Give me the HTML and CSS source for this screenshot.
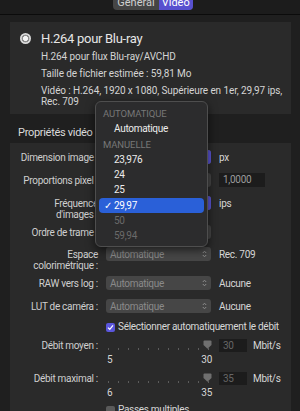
FILE: index.html
```html
<!DOCTYPE html>
<html>
<head>
    <meta charset="utf-8">
    <title>Vidéo</title>
    <link rel="stylesheet" href="styles.css">
</head>
<body>
    <div class="topbar">
        <div class="seg">
            <span class="seg-item">Général</span>
            <span class="seg-item on">Vidéo</span>
        </div>
    </div>

    <div class="panel preset">
        <span class="radio"></span>
        <div class="info">
            <div class="title">H.264 pour Blu-ray</div>
            <p>H.264 pour flux Blu-ray/AVCHD</p>
            <p>Taille de fichier estimée : 59,81 Mo</p>
            <p>Vidéo : H.264, 1920 x 1080, Supérieure en 1er, 29,97 ips,<br>Rec. 709</p>
        </div>
    </div>

    <h2 class="section">Propriétés vidéo</h2>

    <div class="panel props">
        <div class="row">
            <label>Dimension image :</label>
            <div class="popup on"><span>1920 x 1080</span><span class="arrows"><svg width="5" height="8" viewBox="0 0 5 8"><path d="M0.8 3 L2.5 1.2 L4.2 3 M0.8 5 L2.5 6.8 L4.2 5" fill="none" stroke="#fff" stroke-width="1"/></svg></span></div>
            <span class="unit">px</span>
        </div>
        <div class="row">
            <label>Proportions pixel :</label>
            <div class="popup"><span>Carré</span><span class="arrows"></span></div>
            <span class="field">1,0000</span>
        </div>
        <div class="row tall">
            <label>Fréquence<br>d'images :</label>
            <div class="popup on"><span>29,97</span><span class="arrows"></span></div>
            <span class="unit">ips</span>
        </div>
        <div class="row short">
            <label>Ordre de trame :</label>
            <div class="popup"><span>Supérieure en 1er</span><span class="arrows"></span></div>
            <span></span>
        </div>
        <div class="row tall">
            <label>Espace<br>colorimétrique :</label>
            <div class="popup"><span>Automatique</span><span class="arrows"><svg width="5" height="8" viewBox="0 0 5 8"><path d="M0.8 3 L2.5 1.2 L4.2 3 M0.8 5 L2.5 6.8 L4.2 5" fill="none" stroke="#8c8c8c" stroke-width="1"/></svg></span></div>
            <span class="unit">Rec. 709</span>
        </div>
        <div class="row">
            <label>RAW vers log :</label>
            <div class="popup"><span>Automatique</span><span class="arrows"><svg width="5" height="8" viewBox="0 0 5 8"><path d="M0.8 3 L2.5 1.2 L4.2 3 M0.8 5 L2.5 6.8 L4.2 5" fill="none" stroke="#8c8c8c" stroke-width="1"/></svg></span></div>
            <span class="unit">Aucune</span>
        </div>
        <div class="row">
            <label>LUT de caméra :</label>
            <div class="popup"><span>Automatique</span><span class="arrows"><svg width="5" height="8" viewBox="0 0 5 8"><path d="M0.8 3 L2.5 1.2 L4.2 3 M0.8 5 L2.5 6.8 L4.2 5" fill="none" stroke="#8c8c8c" stroke-width="1"/></svg></span></div>
            <span class="unit">Aucune</span>
        </div>
        <div class="row check">
            <span></span>
            <div class="checkline">
                <span class="box on"><svg width="9" height="9" viewBox="0 0 9 9"><path d="M2 4.6 L3.8 6.4 L7 2.4" fill="none" stroke="#fff" stroke-width="1.2"/></svg></span>
                <span>Sélectionner automatiquement le débit</span>
            </div>
        </div>
        <div class="row slider-row">
            <label>Débit moyen :</label>
            <div class="slider">
                <div class="ticks">
                    <i></i><i></i><i></i><i></i><i></i><i></i><i></i><i></i><i></i><i></i><i></i>
                </div>
                <svg class="thumb" width="9" height="9" viewBox="0 0 9 9"><path d="M0.5 1.5 Q0.5 0.5 1.5 0.5 L7.5 0.5 Q8.5 0.5 8.5 1.5 L8.5 5 L4.5 8.8 L0.5 5 Z" fill="#6f6f6f"/></svg>
                <div class="scale"><span>5</span><span>30</span></div>
            </div>
            <div class="fieldline"><span class="field small off">30</span><span>Mbit/s</span></div>
        </div>
        <div class="row slider-row">
            <label>Débit maximal :</label>
            <div class="slider">
                <div class="ticks">
                    <i></i><i></i><i></i><i></i><i></i><i></i><i></i><i></i><i></i><i></i><i></i>
                </div>
                <svg class="thumb" width="9" height="9" viewBox="0 0 9 9"><path d="M0.5 1.5 Q0.5 0.5 1.5 0.5 L7.5 0.5 Q8.5 0.5 8.5 1.5 L8.5 5 L4.5 8.8 L0.5 5 Z" fill="#6f6f6f"/></svg>
                <div class="scale"><span>6</span><span>35</span></div>
            </div>
            <div class="fieldline"><span class="field small off">35</span><span>Mbit/s</span></div>
        </div>
        <div class="row check">
            <span></span>
            <div class="checkline">
                <span class="box"></span>
                <span>Passes multiples</span>
            </div>
        </div>
    </div>

    <!-- menu ouvert de la fréquence d'images -->
    <div class="menu">
        <div class="menu-head">AUTOMATIQUE</div>
        <div class="menu-item">Automatique</div>
        <div class="menu-head">MANUELLE</div>
        <div class="menu-item">23,976</div>
        <div class="menu-item">24</div>
        <div class="menu-item">25</div>
        <div class="menu-item selected"><span class="tick">✓</span>29,97</div>
        <div class="menu-item dim">50</div>
        <div class="menu-item dim">59,94</div>
    </div>
</body>
</html>
```

FILE: styles.css
```css
body {
    margin: 0;
    height: 411px;
    overflow: hidden;
    background-color: #1f1f1f;
    color: #d4d4d4;
    font-family: Roboto, "Noto Sans", sans-serif;
    font-size: 10px;
    letter-spacing: -0.3px;
}

/* Barre d'onglets */
.topbar {
    height: 14px;
    background-color: #1c1c1c;
    border-bottom: 1px solid #0b0b0b;
    display: flex;
    justify-content: center;
    overflow: hidden;
}

.seg {
    display: flex;
    height: 15px;
    margin: -5px 0 0 6px;
    border-radius: 4px;
    background-color: #454545;
}

.seg-item {
    padding: 0 4px;
    line-height: 15px;
    font-size: 11px;
    letter-spacing: 0;
    color: #cfcfcf;
}

.seg-item.on {
    padding: 0 3px;
    background-color: #5750cf;
    color: #fff;
    border-radius: 0 4px 4px 0;
}

/* Panneaux */
.panel {
    margin-left: 10px;
    width: 281px;
    background-color: #2a2a2a;
}

.preset {
    margin-top: 7px;
    display: flex;
    padding: 10px 0 7px 10px;
    box-sizing: border-box;
}

.radio {
    flex-shrink: 0;
    width: 11px;
    height: 11px;
    margin: 1px 10px 0 0;
    border-radius: 50%;
    background: radial-gradient(circle, #f4f4f4 0 2.2px, #8d8d8d 2.8px 3.6px, #dadada 4.2px);
}

.title {
    font-size: 13px;
    line-height: 13px;
    color: #e6e6e6;
}

.info p {
    margin: 6px 0 0;
    line-height: 11px;
    letter-spacing: -0.1px;
    white-space: nowrap;
}

.section {
    margin: 12px 0 4px 18px;
    font-size: 11px;
    line-height: 13px;
    font-weight: normal;
    color: #dadada;
}

.props {
    height: 270px;
    padding-top: 6px;
    box-sizing: border-box;
}

/* Lignes du formulaire */
.row {
    display: grid;
    grid-template-columns: 88px 105px auto;
    column-gap: 8px;
    height: 17px;
    margin-bottom: 6px;
    align-items: start;
}

.row.tall { height: 23px; }
.row.short { height: 16px; }
.row.check { height: 11px; }
.row.slider-row { height: 27px; }

.row label {
    text-align: right;
    padding-top: 3px;
    line-height: 11px;
    white-space: nowrap;
    color: #cfcfcf;
}

.slider-row label { padding-top: 2px; }

.unit {
    padding-top: 3px;
    line-height: 11px;
    color: #d6d6d6;
}

.popup {
    height: 14px;
    margin-top: 1px;
    display: flex;
    align-items: center;
    padding-left: 4px;
    border-radius: 3px;
    background-color: #464646;
    color: #8a8a8a;
    overflow: hidden;
}

.popup .arrows {
    margin-left: auto;
    width: 13px;
    height: 14px;
    display: flex;
    align-items: center;
    justify-content: center;
}

.popup.on {
    background-color: #5c5c5c;
    color: #e6e6e6;
}

.popup.on .arrows {
    background-color: #5b55d6;
}

.field {
    display: block;
    width: 46px;
    height: 14px;
    margin-top: 1px;
    padding-left: 4px;
    box-sizing: border-box;
    line-height: 14px;
    background-color: #1c1c1c;
    color: #9b9b9b;
}

.field.small {
    width: 28px;
    height: 13px;
    line-height: 13px;
}

.field.off { color: #666; }

.fieldline {
    display: flex;
    gap: 6px;
    align-items: center;
    color: #d6d6d6;
}

.checkline {
    grid-column: 2 / 4;
    display: flex;
    gap: 3px;
    line-height: 11px;
    white-space: nowrap;
    color: #d8d8d8;
}

.box {
    width: 9px;
    height: 9px;
    margin-top: 2px;
    border-radius: 2px;
    background-color: #5a5a5a;
    display: flex;
}

.box.on { background-color: #5a56dc; }

/* Curseurs */
.slider {
    position: relative;
    height: 27px;
}

.ticks {
    height: 16px;
    display: flex;
    justify-content: space-between;
    padding: 0 2px 0 2px;
}

.ticks i {
    width: 1px;
    height: 2px;
    margin-top: 10px;
    background-color: #5c5c5c;
}

.thumb {
    position: absolute;
    left: 97px;
    top: 2px;
}

.scale {
    display: flex;
    justify-content: space-between;
    line-height: 11px;
    padding-left: 1px;
    margin-right: -1px;
    color: #d6d6d6;
}

/* Menu déroulant ouvert */
.menu {
    position: absolute;
    left: 95px;
    top: 101px;
    width: 113px;
    box-sizing: border-box;
    padding: 4px 3px 2px;
    background-color: #2c2c2d;
    border: 1px solid #4e4e4e;
    border-radius: 6px;
    box-shadow: 0 3px 10px rgba(0, 0, 0, 0.6);
}

.menu-head,
.menu-item {
    height: 15.3px;
    line-height: 15.3px;
    white-space: nowrap;
}

.menu-head {
    padding-left: 4px;
    letter-spacing: -0.1px;
    font-size: 9.5px;
    color: #777;
}

.menu-item {
    position: relative;
    padding-left: 15px;
    color: #ececec;
}

.menu-item.selected {
    background-color: #2a60d8;
    border-radius: 4px;
    color: #fff;
}

.menu-item.dim { color: #6a6a6a; }

.tick {
    position: absolute;
    left: 5px;
}
```
